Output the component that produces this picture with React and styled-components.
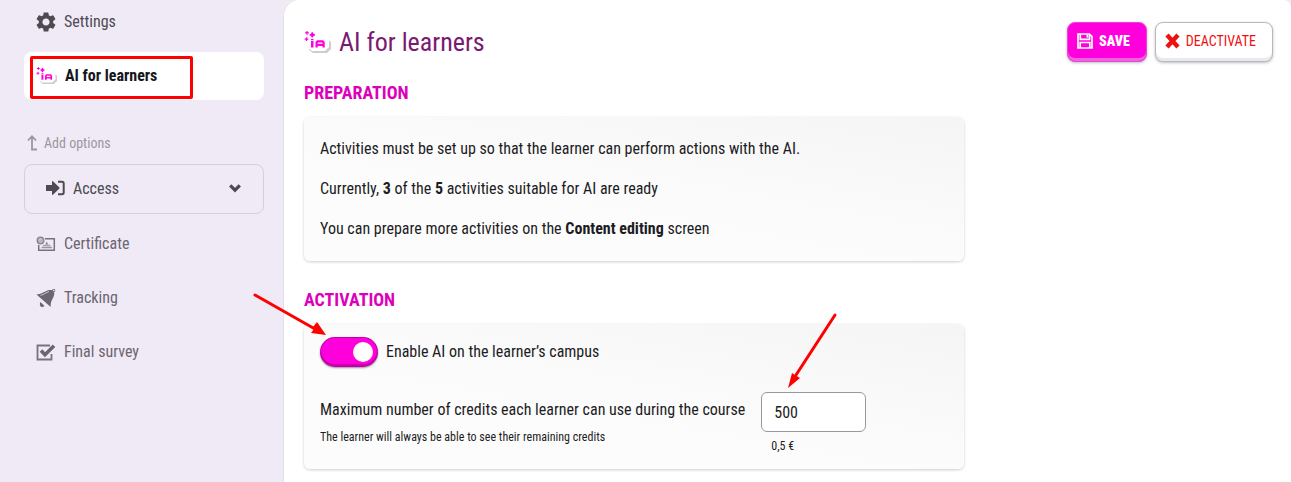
import { useState } from "react";
import styled, { createGlobalStyle } from "styled-components";
import { MdSettings } from "react-icons/md";

const GlobalStyle = createGlobalStyle`
  * {
    box-sizing: border-box;
  }

  body {
    margin: 0;
    background: #f0eaf6;
    color: #1c1c24;
    font-family: "Roboto Condensed", "Liberation Sans Narrow", Roboto, sans-serif;
    font-size: 16px;
    line-height: 24px;
  }

  button, input {
    font-family: inherit;
  }
`;

const Page = styled.div`
  display: grid;
  grid-template-columns: 283px 1fr;
  min-height: 100vh;
`;

const Sidebar = styled.nav`
  padding: 0 19px 20px 24px;
`;

const NavList = styled.div`
  display: flex;
  flex-direction: column;
  gap: 6px;
  margin-top: 6px;
`;

const NavLink = styled.a`
  position: relative;
  display: flex;
  align-items: center;
  gap: 8px;
  height: 48px;
  padding: 0 12px;
  border-radius: 8px;
  color: ${(props) => (props.$active ? "#16161d" : "#6b6570")};
  background: ${(props) => (props.$active ? "#ffffff" : "transparent")};
  font-weight: ${(props) => (props.$active ? 700 : 400)};
  text-decoration: none;
`;

const SettingsLink = styled(NavLink)`
  gap: 6px;
  height: 44px;
  margin-bottom: 8px;
  padding: 0 10px;
  color: #4d4a52;
`;

const AddOptions = styled.div`
  display: flex;
  align-items: center;
  gap: 6px;
  margin: 32px 0 10px;
  padding-left: 3px;
  height: 22px;
  color: #9b979f;
  font-size: 14px;
`;

const AccessButton = styled.button`
  display: flex;
  align-items: center;
  gap: 8px;
  width: 100%;
  height: 50px;
  padding: 0 22px 2px 20px;
  border: 1px solid #cad3df;
  border-radius: 8px;
  background: transparent;
  color: #4d4a52;
  font-size: 16px;
  cursor: pointer;

  svg:last-child {
    margin-left: auto;
  }
`;

const Main = styled.main`
  padding: 22px 18px 10px 20px;
  border-left: 1px solid #e2dfee;
  border-radius: 16px 8px 0 0;
  background: #ffffff;
`;

const Header = styled.header`
  display: flex;
  align-items: center;
  justify-content: space-between;
  height: 40px;
`;

const Title = styled.h1`
  display: flex;
  align-items: center;
  gap: 8px;
  margin: 0;
  color: #7a1a72;
  font-size: 26px;
  font-weight: 400;
  line-height: 40px;
`;

const Actions = styled.div`
  display: flex;
  gap: 8px;
`;

const Button = styled.button`
  display: flex;
  align-items: center;
  gap: 6px;
  height: 40px;
  padding: 0 16px 2px 9px;
  border: 1px solid ${(props) => (props.$primary ? "#f03fdc" : "#b4b9c2")};
  border-radius: 8px;
  background: ${(props) => (props.$primary ? "#ff00dd" : "#ffffff")};
  box-shadow: inset 0 -3px 0 ${(props) => (props.$primary ? "#ea66dc" : "#e8eaee")},
    0 1px 3px rgba(0, 0, 0, 0.25);
  color: ${(props) => (props.$primary ? "#ffffff" : "#ee1111")};
  font-size: 14px;
  font-weight: ${(props) => (props.$primary ? 900 : 400)};
  cursor: pointer;
`;

const SectionTitle = styled.h2`
  margin: ${(props) => props.$top}px 0 12px;
  color: #dd00bb;
  font-size: 18px;
  font-weight: 700;
  line-height: 24px;
`;

const Card = styled.section`
  max-width: 660px;
  padding: ${(props) => props.$padY}px 16px;
  border-radius: 6px;
  background: linear-gradient(10deg, #fcfcfc 40%, #f5f5f5);
  box-shadow: 0 1px 3px rgba(0, 0, 0, 0.2);
`;

const Paragraph = styled.p`
  margin: 0 0 16px;

  &:last-child {
    margin-bottom: 0;
  }
`;

const ToggleLabel = styled.label`
  position: relative;
  display: flex;
  align-items: center;
  gap: 8px;
  width: fit-content;
  cursor: pointer;
`;

const Toggle = styled.input`
  appearance: none;
  display: flex;
  align-items: center;
  justify-content: flex-end;
  width: 58px;
  height: 30px;
  margin: 0;
  padding: 0 4px;
  border: 1px solid rgba(0, 0, 0, 0.25);
  border-radius: 16px;
  background: #b8b4bd;
  box-shadow: inset 0 -2px 0 rgba(0, 0, 0, 0.2), 0 1px 2px rgba(0, 0, 0, 0.4);
  cursor: pointer;

  &::before {
    content: "";
    width: 20px;
    height: 20px;
    border-radius: 50%;
    background: #ffffff;
  }

  &:not(:checked) {
    justify-content: flex-start;
  }

  &:checked {
    background-color: #ff00dd;
  }
`;

const CreditsRow = styled.div`
  display: flex;
  align-items: flex-start;
  gap: 16px;
  margin-top: 25px;
`;

const CreditsLabel = styled.label`
  display: block;
  padding: 6px 0 1px;
`;

const Hint = styled.small`
  display: block;
  padding-top: 4px;
  font-size: 12px;
  line-height: 20px;
`;

const CreditsField = styled.div`
  position: relative;
`;

const CreditsInput = styled.input`
  display: block;
  width: 105px;
  height: 40px;
  padding: 0 12px;
  border: 1px solid #95999f;
  border-radius: 6px;
  background: #ffffff;
  color: #1c1c24;
  font-size: 16px;
`;

const Price = styled(Hint)`
  padding-left: 10px;
`;

// red marks drawn over the screen
const Highlight = styled.span`
  position: absolute;
  inset: 4px auto auto 6px;
  width: 163px;
  height: 43px;
  border: 3px solid #ff0000;
  border-radius: 2px;
`;

const Arrow = styled.svg`
  position: absolute;
  left: ${(props) => props.$left}px;
  top: ${(props) => props.$top}px;
  pointer-events: none;
  overflow: visible;
`;

function AiIcon({ size }) {
  return (
    <svg width={size} height={size * 22 / 27} viewBox="0 0 27 22" fill="none">
      <path d="M8 8h15l4 3v7l-4 4H9l-4-3z" fill="#cdcdcd" />
      <path d="M6 6h15l4 3v7l-4 4H8l-4-3z" fill="#ffffff" />
      <g fill="#ff00dd">
        <path d="M7.600 1.300h1.400l.5 1.500 1.500.5v1.300l-1.500.5-.5 1.500H7.600l-.5-1.500-1.500-.5V3.300l1.500-.5z" />
        <path d="M2.400 0h1.200v1.300h1.300v1.200H3.600v1.300H2.400V2.500H1.100V1.300h1.300z" />
        <path d="M1.900 6.200h1.200v1.300h1.300v1.200H3.100V10H1.900V8.700H.6V7.500h1.300z" />
        <path d="M7 8h2.500v1.300H7zM7 10h2.500v6.500H7z" />
      </g>
      <path d="M12.600 16.500v-5l1-1.200h5l1 1.200v5M12.600 13.800h7" stroke="#ff00dd" strokeWidth="2.200" />
    </svg>
  );
}

function SaveIcon() {
  return (
    <svg width="16" height="16" viewBox="0 0 16 16" fill="none" stroke="#fff" strokeWidth="1.700">
      <path d="M1 1h11.400L15 3.600V15H1z" />
      <path d="M3.300 1v5.300h9.200V1M3.200 15V9.500h9.600V15" />
      <path d="M10.400 2v2.600" />
    </svg>
  );
}

function CrossIcon() {
  return (
    <svg width="15" height="16" viewBox="0 0 15 16" stroke="currentColor" strokeWidth="4.400">
      <path d="M2 2l11 12M13 2L2 14" />
    </svg>
  );
}

function UpIcon() {
  return (
    <svg width="11" height="16" viewBox="0 0 11 16" fill="none" stroke="currentColor" strokeWidth="1.800">
      <path d="M1 5.500L5 1.300l4 4.200M5 1.500v13h5" />
    </svg>
  );
}

function AccessIcon() {
  return (
    <svg width="20" height="16" viewBox="0 0 20 16" fill="currentColor">
      <path d="M1 5.100h6V2q0-1.500 1.200-.5l6 5.700q.7.800 0 1.600l-6 5.700Q7 15.500 7 14v-3.100H1z" />
      <path d="M13 1.700h4q1.700 0 1.700 1.700v9.200q0 1.700-1.700 1.700h-4" fill="none" stroke="currentColor" strokeWidth="2" />
    </svg>
  );
}

function ChevronIcon() {
  return (
    <svg width="12" height="9" viewBox="0 0 12 9" fill="none" stroke="currentColor" strokeWidth="3.200">
      <path d="M1.200 1.300L6 6.200l4.800-4.900" />
    </svg>
  );
}

function CertificateIcon() {
  return (
    <svg width="20" height="16" viewBox="0 0 20 16" fill="none">
      <path d="M9 2.700h9.300v11.600H2.700V9" stroke="#77727d" strokeWidth="1.500" />
      <circle cx="4.500" cy="4.500" r="3.200" fill="#c9c4cf" stroke="#8a8590" strokeWidth="1.500" />
      <path d="M3 4.500l1.200 1.200 2-2.200" stroke="#a39eaa" />
      <path d="M5.500 11.500h10.500" stroke="#9a95a0" strokeWidth="1.500" />
      <path d="M7 9.500h7.500" stroke="#a8a3ae" strokeWidth="1.500" />
      <path d="M9.300 8.500l1.400-3 1.600 3z" fill="#8a8590" />
    </svg>
  );
}

function BellIcon() {
  return (
    <svg width="20" height="20" viewBox="0 0 20 20" fill="#6b6570">
      <path d="M.5 6.500C5 6.500 7.500 4 12 2.300c1.500-.6 3-.5 4 0l1-1.300 2 .3.3 2-1.300 1c.6 2 .1 4-1.500 6.700-1.500 2.500-2 4.500-1.800 8z" />
      <path d="M4.500 14l4 4c-1.500 1.500-3 1.300-3.800.4-.9-.9-1.200-2.800-.2-4.400z" />
      <path d="M4.500 7.300c3-.4 5-2.500 8.500-3.700" stroke="#d8d2de" strokeWidth=".9" fill="none" />
      <circle cx="17.800" cy="2.600" r=".8" fill="#f0eaf6" />
    </svg>
  );
}

function SurveyIcon() {
  return (
    <svg width="20" height="18" viewBox="0 0 20 18" fill="none" stroke="#6b6570">
      <path d="M14 2.500H1.500v14h14V11" stroke="#77727d" strokeWidth="1.800" />
      <path d="M5 7.500l4 4.200L18 2.800" strokeWidth="3.600" />
    </svg>
  );
}

function App() {
  const [enabled, setEnabled] = useState(true);
  const [credits, setCredits] = useState("500");

  return (
    <>
      <GlobalStyle />
      <Page>
        <Sidebar>
          <SettingsLink href="#settings">
            <MdSettings size={24} />
            Settings
          </SettingsLink>
          <NavLink href="#ai" $active>
            <AiIcon size={21} />
            AI for learners
            <Highlight />
          </NavLink>
          <AddOptions>
            <UpIcon />
            Add options
          </AddOptions>
          <AccessButton type="button">
            <AccessIcon />
            Access
            <ChevronIcon />
          </AccessButton>
          <NavList>
            <NavLink href="#certificate">
              <CertificateIcon />
              Certificate
            </NavLink>
            <NavLink href="#tracking">
              <BellIcon />
              Tracking
            </NavLink>
            <NavLink href="#survey">
              <SurveyIcon />
              Final survey
            </NavLink>
          </NavList>
        </Sidebar>

        <Main>
          <Header>
            <Title>
              <AiIcon size={27} />
              AI for learners
            </Title>
            <Actions>
              <Button type="button" $primary>
                <SaveIcon />
                SAVE
              </Button>
              <Button type="button">
                <CrossIcon />
                DEACTIVATE
              </Button>
            </Actions>
          </Header>

          <SectionTitle $top={19}>PREPARATION</SectionTitle>
          <Card $padY={20}>
            <Paragraph>
              Activities must be set up so that the learner can perform actions with the AI.
            </Paragraph>
            <Paragraph>
              Currently, <b>3</b> of the <b>5</b> activities suitable for AI are ready
            </Paragraph>
            <Paragraph>
              You can prepare more activities on the <b>Content editing</b> screen
            </Paragraph>
          </Card>

          <SectionTitle $top={27}>ACTIVATION</SectionTitle>
          <Card $padY={13}>
            <ToggleLabel>
              <Toggle
                type="checkbox"
                role="switch"
                checked={enabled}
                onChange={(e) => setEnabled(e.target.checked)}
              />
              Enable AI on the learner’s campus
              <Arrow $left={-66} $top={-43} width="72" height="42" viewBox="0 0 72 42">
                <path d="M1 1l60 34" stroke="#ff0000" strokeWidth="3" strokeLinecap="round" />
                <path d="M72 41l-15-2 3-4-1-2 4-5z" fill="#ff0000" />
              </Arrow>
            </ToggleLabel>
            <CreditsRow>
              <div>
                <CreditsLabel htmlFor="credits">
                  Maximum number of credits each learner can use during the course
                </CreditsLabel>
                <Hint>The learner will always be able to see their remaining credits</Hint>
              </div>
              <CreditsField>
                <CreditsInput
                  id="credits"
                  type="text"
                  value={credits}
                  onChange={(e) => setCredits(e.target.value)}
                />
                <Price>0,5 €</Price>
                <Arrow $left={27} $top={-78} width="48" height="74" viewBox="0 0 48 74">
                  <path d="M47 1L8 61" stroke="#ff0000" strokeWidth="3" strokeLinecap="round" />
                  <path d="M0 74l4-15 3 2 5 3z" fill="#ff0000" />
                </Arrow>
              </CreditsField>
            </CreditsRow>
          </Card>
        </Main>
      </Page>
    </>
  );
}

export default App;
